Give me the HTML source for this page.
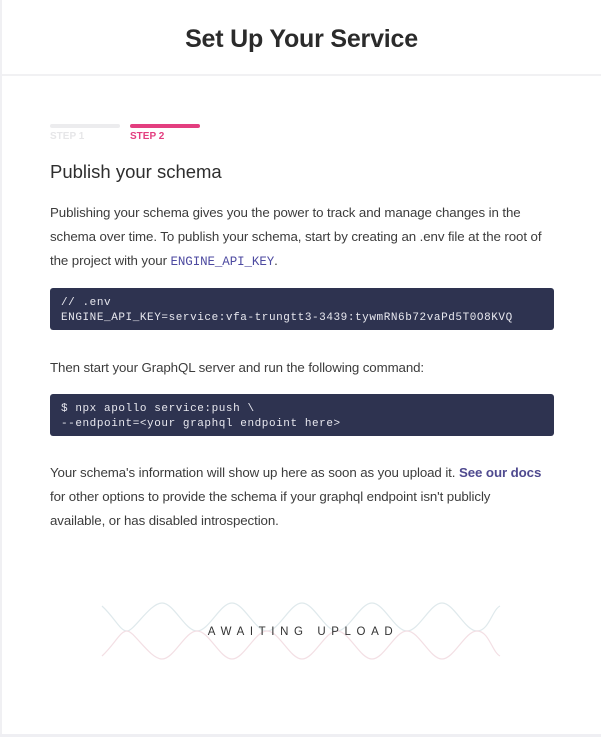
<!DOCTYPE html>
<html><head><meta charset="utf-8"><style>
*{margin:0;padding:0;box-sizing:border-box}
body{width:601px;height:737px;background:#fff;font-family:"Liberation Sans",sans-serif;position:relative;overflow:hidden;color:#3a3a3a}
.lb{position:absolute;left:0;top:0;width:2px;height:737px;background:#f0f0f3}
.hdr{position:absolute;left:2px;top:0;width:599px;height:76px;border-bottom:2px solid #f1f1f3;text-align:center}
.hdr h1{font-size:25px;font-weight:bold;color:#2b2b2b;line-height:78px;letter-spacing:-0.2px}
.bar{position:absolute;top:124px;width:70px;height:4px;border-radius:2px}
.sl{position:absolute;top:131px;font-size:10px;font-weight:bold}
h2{position:absolute;left:50px;top:161px;font-size:18.5px;font-weight:normal;color:#2e2e2e}
p{position:absolute;left:50px;font-size:13.3px;line-height:24px;color:#3c3c3c;letter-spacing:-0.1px;white-space:nowrap}
code{font-family:"Liberation Mono",monospace;color:#4d4aa0;font-size:12.5px}
.cb{position:absolute;left:50px;width:504px;height:42px;background:#2e3350;border-radius:3px;color:#e8e8ef;font-family:"Liberation Mono",monospace;font-size:11px;line-height:15px;padding:8px 0 0 11px;letter-spacing:0.57px;white-space:pre}
a{color:#4f4a8f;font-weight:bold;text-decoration:none}
.aw{position:absolute;left:0;top:626px;width:601px;text-align:center;font-size:11.5px;letter-spacing:5.6px;color:#333;padding-left:5px}
.bb{position:absolute;left:0;top:734px;width:601px;height:3px;background:#efeff3}
</style></head><body>
<div class="lb"></div>
<div class="hdr"><h1>Set Up Your Service</h1></div>
<div class="bar" style="left:50px;background:#ececee"></div>
<div class="bar" style="left:130px;background:#e33e7f"></div>
<div class="sl" style="left:50px;color:#e6e6e8">STEP 1</div>
<div class="sl" style="left:130px;color:#e33e7f">STEP 2</div>
<h2>Publish your schema</h2>
<p style="top:201px">Publishing your schema gives you the power to track and manage changes in the<br>schema over time. To publish your schema, start by creating an .env file at the root of<br>the project with your <code>ENGINE_API_KEY</code>.</p>
<div class="cb" style="top:288px">// .env
ENGINE_API_KEY=service:vfa-trungtt3-3439:tywmRN6b72vaPd5T0O8KVQ</div>
<p style="top:356px">Then start your GraphQL server and run the following command:</p>
<div class="cb" style="top:394px">$ npx apollo service:push \
--endpoint=&lt;your graphql endpoint here&gt;</div>
<p style="top:461px">Your schema's information will show up here as soon as you upload it. <a>See our docs</a><br>for other options to provide the schema if your graphql endpoint isn't publicly<br>available, or has disabled introspection.</p>
<svg style="position:absolute;left:0;top:590px" width="601" height="80">
<path d="M102,16 C115,28 120,41 127,41 S150,13 162,13 S185,41 197,41 S220,13 232,13 S255,41 267,41 S290,13 302,13 S325,41 337,41 S360,13 372,13 S395,41 407,41 S430,13 442,13 S465,41 477,41 S492,20 500,16" fill="none" stroke="#dfe9ec" stroke-width="1.2"/>
<path d="M102,66 C115,54 120,41 127,41 S150,69 162,69 S185,41 197,41 S220,69 232,69 S255,41 267,41 S290,69 302,69 S325,41 337,41 S360,69 372,69 S395,41 407,41 S430,69 442,69 S465,41 477,41 S492,62 500,66" fill="none" stroke="#f3dfe4" stroke-width="1.2"/>
</svg>
<div class="aw">AWAITING UPLOAD</div>
<div class="bb"></div>
</body></html>
